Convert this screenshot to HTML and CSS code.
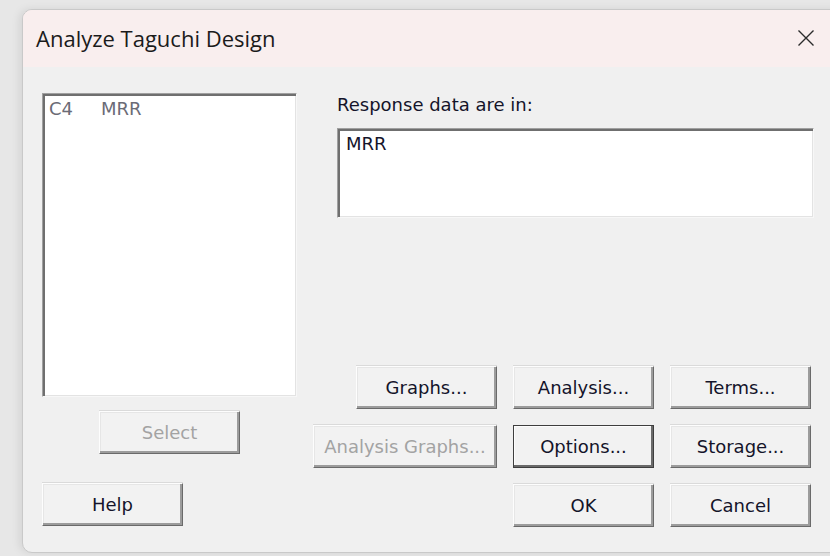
FILE: index.html
```html
<!DOCTYPE html>
<html lang="en">
<head>
<meta charset="utf-8">
<title>Analyze Taguchi Design</title>
<link rel="stylesheet" href="styles.css">
</head>
<body>
<div class="window">
  <div class="titlebar">
    <span class="title">Analyze Taguchi Design</span>
    <svg class="close" width="18" height="18" viewBox="0 0 18 18" aria-hidden="true">
      <path d="M1.5 1.5 L16.5 16.5 M16.5 1.5 L1.5 16.5" stroke="#2b2b2b" stroke-width="1.4" fill="none"/>
    </svg>
  </div>
  <div class="content">
    <div class="left-col">
      <div class="listbox">
        <div class="list-item"><span class="col-id">C4</span><span>MRR</span></div>
      </div>
      <button class="btn btn-select" disabled>Select</button>
      <button class="btn btn-help">Help</button>
    </div>
    <div class="right-col">
      <div class="response">
        <div class="field-label">Response data are in:</div>
        <div class="textbox">MRR</div>
      </div>
      <div class="button-grid">
        <button class="btn btn-graphs">Graphs...</button>
        <button class="btn">Analysis...</button>
        <button class="btn">Terms...</button>
        <button class="btn btn-wide" disabled>Analysis Graphs...</button>
        <button class="btn btn-default">Options...</button>
        <button class="btn">Storage...</button>
        <button class="btn btn-ok">OK</button>
        <button class="btn">Cancel</button>
      </div>
    </div>
  </div>
</div>
</body>
</html>
```

FILE: styles.css
```css
html, body {
  margin: 0;
  padding: 0;
}

body {
  width: 830px;
  height: 556px;
  overflow: hidden;
  background: #e7e7e7;
  padding: 9px 0 0 22px;
  box-sizing: border-box;
  font-family: "DejaVu Sans", Verdana, sans-serif;
  font-size: 18px;
  color: #14142a;
}

/* the dialog runs past the right edge of the viewport */
.window {
  width: 830px;
  height: 544px;
  box-sizing: border-box;
  background: #f0f0f0;
  border: 1px solid #c9c9c9;
  border-radius: 10px;
  overflow: hidden;
  box-shadow: -3px 0 8px rgba(0, 0, 0, 0.08);
}

.titlebar {
  width: 808px;
  height: 57px;
  background: #f9eeee;
  display: flex;
  align-items: center;
  justify-content: space-between;
  padding: 0 16px 0 13px;
  box-sizing: border-box;
}

.window {
  background: linear-gradient(#f9eeee, #f9eeee) top / 100% 57px no-repeat, #f0f0f0;
}

.title {
  font-family: "Open Sans", "Noto Sans", sans-serif;
  font-size: 22px;
  color: #1b1b1b;
  margin-top: -2px;
}

.close {
  display: block;
  margin-top: -2px;
}

.content {
  display: flex;
  gap: 16px;
  padding: 26px 0 0 19px;
  height: 460px;
  box-sizing: border-box;
}

.left-col {
  width: 255px;
  display: flex;
  flex-direction: column;
}

.listbox {
  height: 304px;
  box-sizing: border-box;
  background: #fff;
  border: 1px solid;
  border-color: #a0a0a0 #f7f7f7 #f7f7f7 #a0a0a0;
  box-shadow: inset 2px 2px 0 #6f6f6f, inset -1px -1px 0 #e3e3e3;
  padding: 4px 6px;
}

.list-item {
  display: flex;
  color: #6b6b76;
  line-height: 21px;
}

.col-id {
  width: 52px;
}

.btn {
  width: 141px;
  height: 43px;
  box-sizing: border-box;
  background: #f2f2f2;
  font-family: "DejaVu Sans", Verdana, sans-serif;
  font-size: 18px;
  color: #14142a;
  border: 1px solid;
  border-color: #fdfdfd #6a6a6a #6a6a6a #fdfdfd;
  box-shadow: inset -2px -2px 0 #9c9c9c, inset 1px 1px 0 #e6e6e6, 0 -1px 0 #dadada;
  padding: 0;
  margin: 0;
}

.btn:disabled {
  color: #a3a3a3;
}

.btn-select {
  align-self: center;
  margin-top: 14px;
}

.btn-help {
  margin-top: 29px;
}

.btn-default {
  border-color: #3e3e3e;
  box-shadow: inset -2px -2px 0 #6a6a6a, inset 1px 1px 0 #fdfdfd;
}

.right-col {
  width: 498px;
  display: flex;
  flex-direction: column;
}

.response {
  margin-left: 24px;
}

.field-label {
  line-height: 22px;
  margin-top: 1px;
}

.textbox {
  margin-top: 12px;
  width: 477px;
  height: 90px;
  box-sizing: border-box;
  background: #fff;
  border: 1px solid;
  border-color: #a0a0a0 #f7f7f7 #f7f7f7 #a0a0a0;
  box-shadow: inset 2px 2px 0 #6f6f6f, inset -1px -1px 0 #e3e3e3;
  padding: 4px 8px;
  line-height: 21px;
}

.button-grid {
  margin-top: auto;
  display: grid;
  grid-template-columns: 184px 141px 141px;
  column-gap: 16px;
  row-gap: 16px;
}

.btn-graphs {
  justify-self: end;
}

.btn-wide {
  width: 184px;
}

.btn-ok {
  grid-column: 2;
}
```
